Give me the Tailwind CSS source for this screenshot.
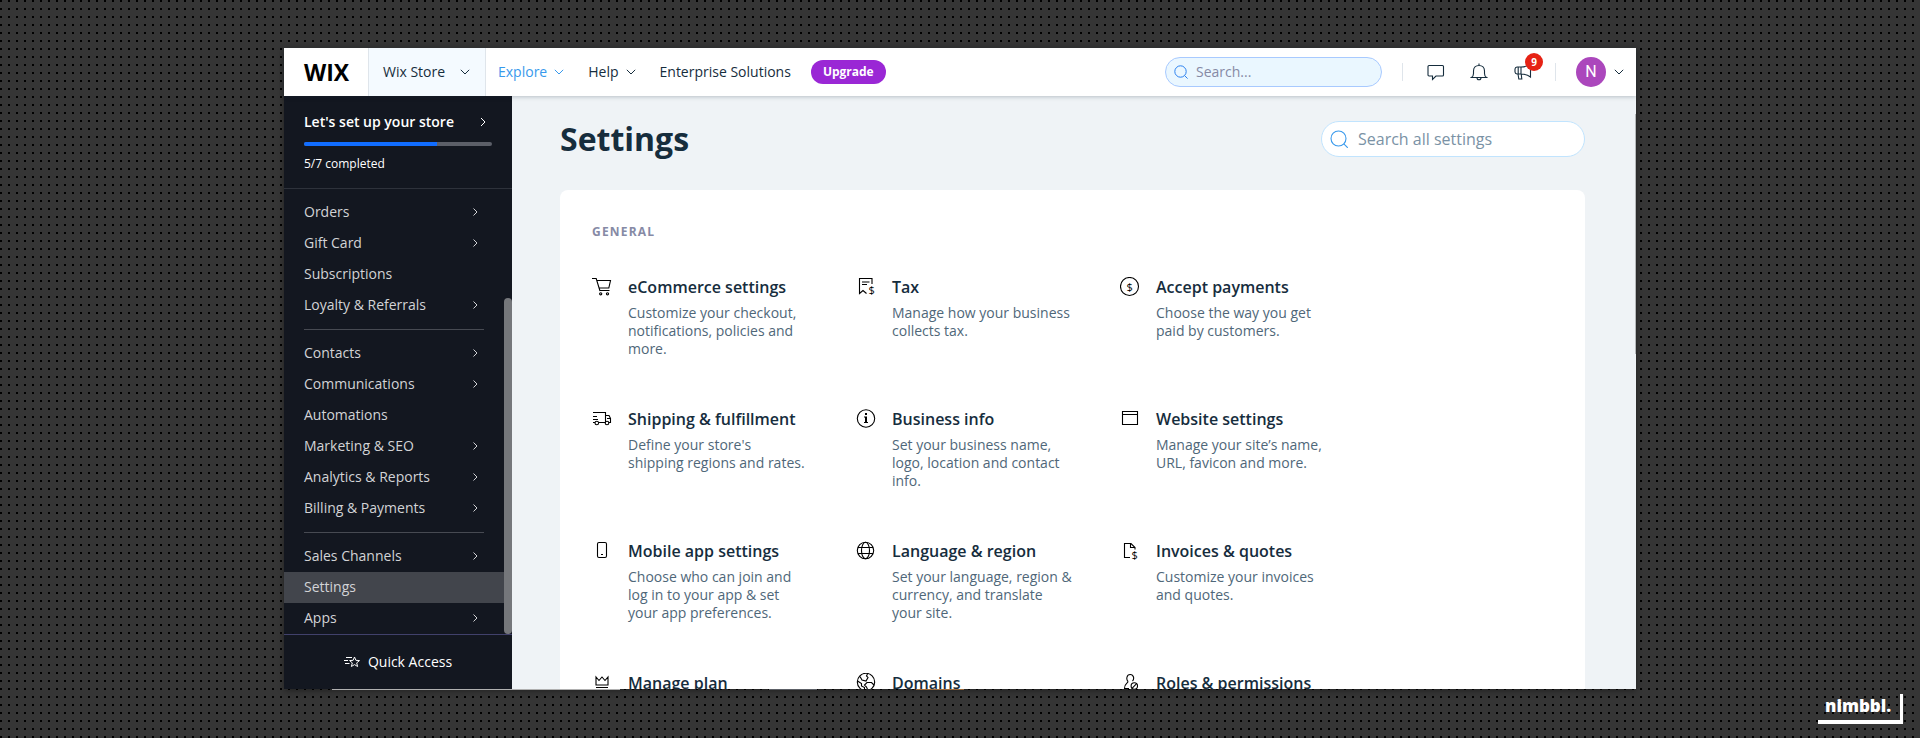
<!DOCTYPE html>
<html lang="en">
<head>
<meta charset="utf-8">
<title>Settings</title>
<script src="https://cdn.jsdelivr.net/npm/@tailwindcss/browser@4"></script>
</head>
<body class="flex h-screen flex-col overflow-hidden bg-[#353535] bg-[linear-gradient(90deg,transparent_2px,#353535_2px),linear-gradient(#000_2px,#353535_2px)] bg-size-[8px_8px] px-71 pt-12 pb-12 font-['Open_Sans',sans-serif] text-sm text-[#162d3d]">

<div class="flex min-h-0 flex-1 flex-col shadow-[0_2px_6px_rgba(0,0,0,0.35)]">
  <header class="relative z-10 flex h-12 shrink-0 items-center bg-white shadow-[0_1px_4px_rgba(22,45,61,0.25)]">
    <a href="#" class="flex w-21 pl-5 text-[23px] leading-none font-bold text-black">WIX</a>
    <button class="flex h-12 w-[118px] items-center justify-between border-x border-[#dfe5eb] bg-[#f4faff] pr-[15px] pl-3.5">Wix Store
      <svg class="h-2.5 w-2.5" viewBox="0 0 10 10" fill="none" stroke="currentColor"><path d="M.8 2.8 5 7l4.2-4.2"/></svg></button>
    <nav class="flex items-center pl-3">
      <button class="flex items-center gap-[7px] text-[#3899ec]">Explore
        <svg class="h-2.5 w-2.5" viewBox="0 0 10 10" fill="none" stroke="currentColor"><path d="M.8 2.8 5 7l4.2-4.2"/></svg></button>
      <button class="ml-6 flex items-center gap-[7px]">Help
        <svg class="h-2.5 w-2.5" viewBox="0 0 10 10" fill="none" stroke="currentColor"><path d="M.8 2.8 5 7l4.2-4.2"/></svg></button>
      <a href="#" class="ml-6">Enterprise Solutions</a>
      <button class="ml-5 h-6 rounded-full bg-[#9a27d5] px-3 text-xs font-bold text-white">Upgrade</button>
    </nav>
    <div class="ml-auto flex items-center">
      <label class="flex h-[30px] w-[217px] items-center gap-2 rounded-full border border-[#a8caff] bg-[#eaf7ff] pl-2">
        <svg class="h-3.5 w-3.5 shrink-0 text-[#2b81f0]" viewBox="0 0 14 14" fill="none" stroke="currentColor"><circle cx="6.5" cy="6.5" r="5.7"/><path d="m10.6 10.6 3 3"/></svg>
        <input type="search" aria-label="Search" placeholder="Search..." class="w-full min-w-0 bg-transparent outline-none placeholder:text-[#868aa5]">
      </label>
      <span class="ml-5 h-[18px] w-px bg-[#dfe5eb]"></span>
      <button aria-label="Inbox" class="ml-6"><svg class="h-[18px] w-[18px]" viewBox="0 0 18 18" fill="none" stroke="currentColor" stroke-width="1.1"><path d="M2 2.5h13.500a1 1 0 0 1 1 1v8.500a1 1 0 0 1-1 1H9L5.500 16.500V13H2a1 1 0 0 1-1-1V3.500a1 1 0 0 1 1-1Z"/></svg></button>
      <button aria-label="Notifications" class="ml-[25px]"><svg class="h-[18px] w-[18px]" viewBox="0 0 18 18" fill="none" stroke="currentColor" stroke-width="1.1"><path d="M9 .5v2M1.500 14.500h15c-1.500-1-2-2.500-2-4V8c0-3.300-2.200-5.500-5.500-5.500S3.500 4.700 3.500 8v2.500c0 1.500-.5 3-2 4ZM7 14.800a2 2 0 0 0 4 0"/></svg></button>
      <button aria-label="What's new, 9 updates" class="relative ml-[26px]"><svg class="h-[18px] w-[18px]" viewBox="0 0 18 18" fill="none" stroke="currentColor" stroke-width="1.1"><path d="M7 4H3A2.200 2.200 0 0 0 1 6v3a2.200 2.200 0 0 0 2 2h4ZM7 4c4 0 7-1 9.500-3v13C14 12 11 11 7 11M4 11l.8 5h3L7.200 11M4.200 4v7"/></svg>
        <span class="absolute -top-2.5 left-[11px] flex h-[18px] w-[18px] items-center justify-center rounded-full bg-[#e62214] text-[10px] font-bold text-white">9</span></button>
      <span class="ml-[23px] h-[18px] w-px bg-[#dfe5eb]"></span>
      <button aria-label="Account" class="ml-5 flex items-center gap-2 pr-3"><span class="flex h-[30px] w-[30px] items-center justify-center rounded-full bg-[#ab47bc] font-['Roboto',sans-serif] text-base font-normal text-white">N</span>
        <svg class="h-2.5 w-2.5" viewBox="0 0 10 10" fill="none" stroke="currentColor"><path d="M.8 2.8 5 7l4.200-4.200"/></svg></button>
    </div>
  </header>

  <div class="flex min-h-0 flex-1">
    <aside class="relative flex w-57 shrink-0 flex-col bg-[#131720] text-[#d2d3d6]">
      <div class="h-[93px] shrink-0 border-b border-[#2e323b] px-5 pt-4 text-white">
        <a href="#" class="flex h-5 items-center justify-between pr-1.5 font-semibold">Let's set up your store
          <svg class="h-2.5 w-1.5" viewBox="0 0 6 10" fill="none" stroke="currentColor"><path d="m1 1 4 4-4 4"/></svg></a>
        <div class="mt-2.5 h-1 overflow-hidden rounded-full bg-[#5c5f68]" role="progressbar" aria-label="Store setup" aria-valuenow="5" aria-valuemax="7"><div class="h-1 bg-[#116dff]" style="width:71%"></div></div>
        <p class="mt-2.5 text-xs leading-4">5/7 completed</p>
      </div>
      <nav id="menu" class="min-h-0 flex-1 overflow-hidden pt-2 font-medium"></nav>
      <span class="absolute top-[202px] right-0 bottom-[55px] w-2 rounded-full bg-[#75777b]"></span>
      <button class="flex h-[55px] shrink-0 items-center justify-center gap-2 border-t border-[#41416b] font-medium text-white">
        <svg class="h-4 w-4" viewBox="0 0 16 16" fill="none" stroke="currentColor"><path d="m10.500 3 1.400 3.300 3.600.3-2.800 2.300.9 3.600-3.100-1.900-3.100 1.900.9-3.600L5.600 6.600l3.500-.3ZM2 3.500h6M0 6.500h4M1 9.500h4.500"/></svg>Quick Access</button>
    </aside>

    <main class="relative min-w-0 flex-1 overflow-hidden bg-[#eff3f6] pr-[51px] pl-12">
      <div class="flex items-center justify-between pt-[23px]">
        <h1 class="text-[32px] leading-10 font-bold">Settings</h1>
        <label class="flex h-9 w-66 items-center gap-2.5 rounded-full border border-[#c1e4fe] bg-white pl-2">
          <svg class="h-[18px] w-[18px] shrink-0 text-[#3899ec]" viewBox="0 0 18 18" fill="none" stroke="currentColor" stroke-width="1.100"><circle cx="8.500" cy="8.500" r="7.500"/><path d="m13.800 13.800 4 4"/></svg>
          <input type="search" aria-label="Search all settings" placeholder="Search all settings" class="w-full min-w-0 bg-transparent text-base outline-none placeholder:text-[#7a92a5]">
        </label>
      </div>
      <section class="mt-[31px] h-[800px] rounded-lg bg-white px-8 pt-[33px]">
        <h2 class="text-xs leading-[18px] font-bold tracking-widest text-[#868aa5]">GENERAL</h2>
        <div id="cards" class="mt-9 grid grid-cols-[repeat(3,264px)] auto-rows-[132px]"></div>
      </section>
      <span class="absolute top-[18px] right-0 h-60 w-px bg-[#b5b8ba]"></span>
    </main>
  </div>
</div>
<div class="flex h-px shrink-0 pl-12"><span class="h-px w-72 bg-[#b0b0b0]"></span><span class="ml-[149px] h-px w-12 bg-[#5c6066]"></span><span class="ml-[99px] h-px w-12 bg-[#9a6a3c]"></span></div>

<div class="absolute right-[17px] bottom-3.5 flex h-[30px] w-[85px] items-center border-r-3 border-b-4 border-white pb-1 pl-[7px] text-[17px] leading-none font-extrabold text-white">nimbbl.</div>

<script>
const menu = [
  ['Orders', 1], ['Gift Card', 1], ['Subscriptions', 0], ['Loyalty & Referrals', 1], null,
  ['Contacts', 1], ['Communications', 1], ['Automations', 0], ['Marketing & SEO', 1], ['Analytics & Reports', 1], ['Billing & Payments', 1], null,
  ['Sales Channels', 1], ['Settings', 0], ['Apps', 1],
];
document.getElementById('menu').innerHTML = menu.map(item => {
  if (!item) return '<hr class="mt-2 mr-7 mb-2 ml-5 border-[#474a52]">';
  const [label, more] = item;
  const active = label === 'Settings' ? 'bg-[#42454c]' : '';
  const arrow = more ? '<svg class="h-2 w-[5px]" viewBox="0 0 5 8" fill="none" stroke="currentColor"><path d="m.5.500 3.500 3.500L.5 7.500"/></svg>' : '';
  return `<a href="#" class="flex h-[31px] items-center justify-between pr-[34px] pb-px pl-5 ${active}">${label.replace('&', '&amp;')}${arrow}</a>`;
}).join('');

const cards = [
  ['eCommerce settings', 'Customize your checkout,<br>notifications, policies and<br>more.',
   '<path d="M0 1.500h4.200L8 14M4.800 3.500h13.700l-1.700 7.500H7.200M7.500 13.500h10"/><circle cx="8.700" cy="16.800" r="1.100"/><circle cx="15.500" cy="16.800" r="1.100"/>'],
  ['Tax', 'Manage how your business<br>collects tax.',
   '<path d="M16 7V1.500H3.500v15l3.500-3 3.500 3M6 5h7.500M6 7.500h5"/><text x="12.500" y="16.500" font-size="11" fill="currentColor" stroke="none">$</text>'],
  ['Accept payments', 'Choose the way you get<br>paid by customers.',
   '<circle cx="9.500" cy="9.500" r="9"/><text x="6.500" y="13.500" font-size="11" fill="currentColor" stroke="none">$</text>'],
  ['Shipping &amp; fulfillment', "Define your store's<br>shipping regions and rates.",
   '<path d="M1 3.500h12.500v10M1 7.500h4M1 10.500h5M1 13.500h2M6.600 13.500h6.600M13.500 6.500H17l1.500 3v4h-1.700M15 9.500h3.500"/><circle cx="4.800" cy="14" r="1.800"/><circle cx="15" cy="14" r="1.800"/>'],
  ['Business info', 'Set your business name,<br>logo, location and contact<br>info.',
   '<circle cx="10" cy="9.500" r="8.700"/><path fill="currentColor" stroke="none" d="M9 4h2v2H9zM8 7.500h3V13h1v1H8v-1h1V8.500H8z"/>'],
  ['Website settings', 'Manage your site’s name,<br>URL, favicon and more.',
   '<path d="M2.500 2.500h15v13h-15zM2.500 5.500h15"/>'],
  ['Mobile app settings', 'Choose who can join and<br>log in to your app &amp; set<br>your app preferences.',
   '<rect x="5.500" y="1.500" width="9" height="15" rx="1.500"/><path d="M9 13.500h2"/>'],
  ['Language &amp; region', 'Set your language, region &amp;<br>currency, and translate<br>your site.',
   '<circle cx="9.500" cy="9.500" r="8.200"/><ellipse cx="9.500" cy="9.500" rx="4" ry="8.200"/><path d="M2 6.500h15M2 12.500h15"/>'],
  ['Invoices &amp; quotes', 'Customize your invoices<br>and quotes.',
   '<path d="M10 16.500H4.500v-14h6.500l4 4v2M10.500 2.500v4H15"/><text x="11.500" y="17.500" font-size="11" fill="currentColor" stroke="none">$</text>'],
  ['Manage plan', '', '<path d="M4 4v8h12V4l-3 3.500L10 4 7 7.500ZM4 14.500h12"/>'],
  ['Domains', '', '<circle cx="10" cy="9" r="8.700"/><path d="M4 3.500 6 7l4 1 2-3.500L10.500 3l1-2M1.500 8l4 2.500V13l3 1.500v3M18 12l-2.500-2.500H11L8.500 12l2 2 1.500 3.500"/>'],
  ['Roles &amp; permissions', '', '<path d="M8 8.500C6 6.500 6.500 1.500 10.200 1.500S14.500 6 12.500 8M8 8.500C8 10.500 4.500 10 4.500 15.500H9"/><circle cx="14.300" cy="13" r="3.200"/><path d="m12 15.300 4.600-4.600"/>'],
];
document.getElementById('cards').innerHTML = cards.map(([title, text, icon]) => `
  <a href="#" class="flex gap-4">
    <svg class="h-5 w-5 shrink-0 text-black" viewBox="0 0 20 20" fill="none" stroke="currentColor" stroke-width="1.100">${icon}</svg>
    <span class="block">
      <strong class="block text-base leading-5 font-semibold">${title}</strong>
      <span class="mt-[7px] block leading-[18px] text-[#4f6779]">${text}</span>
    </span>
  </a>`).join('');
</script>
</body>
</html>
